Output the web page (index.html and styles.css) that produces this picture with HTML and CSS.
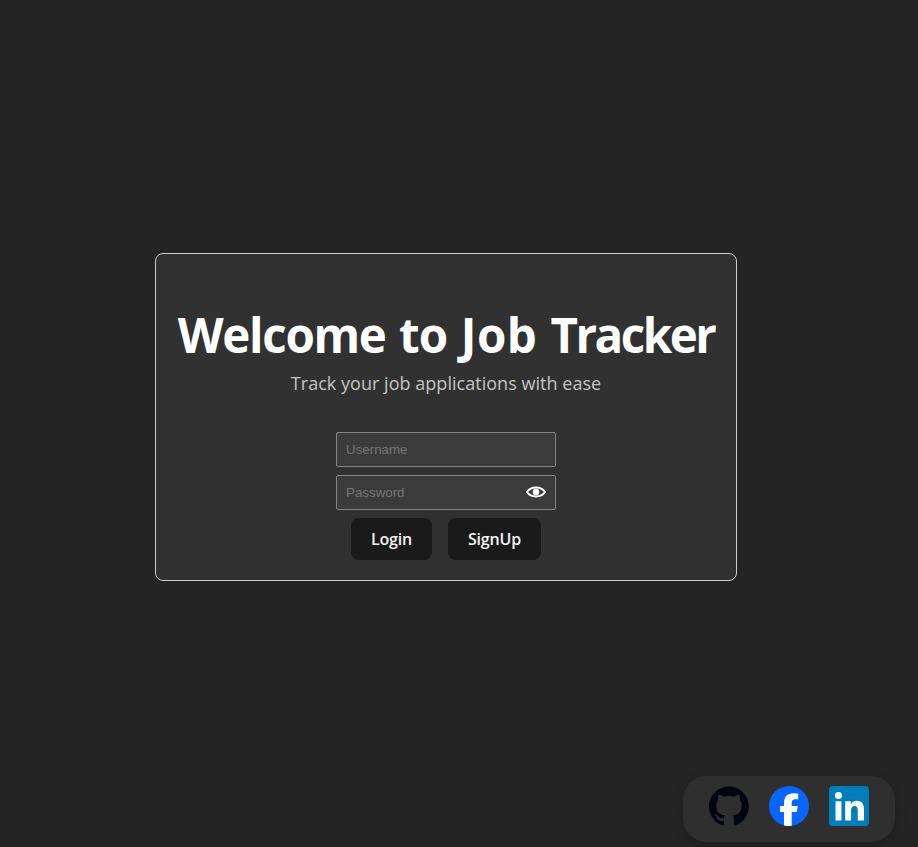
FILE: index.html
```html
<!DOCTYPE html>
<html lang="en">
<head>
<meta charset="utf-8">
<title>Job Tracker</title>
<link rel="stylesheet" href="styles.css">
</head>
<body>
<main class="page">
  <section class="card">
    <h1 class="title"><span class="word-welcome">Welcome</span> <span class="word-to">to</span> <span class="word-job">Job</span> <span class="word-tracker">Tracker</span></h1>
    <p class="subtitle">Track your job applications with ease</p>
    <form class="form">
      <input class="field" type="text" placeholder="Username">
      <div class="password">
        <input class="field" type="password" placeholder="Password">
        <svg class="eye" viewBox="0 0 20 12" aria-hidden="true">
          <path d="M1 6C3 2.900 6.300 1.500 10 1.500S17 2.900 19 6C17 9.100 13.700 10.500 10 10.500S3 9.100 1 6Z" fill="none" stroke="#fff" stroke-width="1.800"/>
          <circle cx="10" cy="6" r="3.300" fill="#fff"/>
        </svg>
      </div>
      <div class="actions">
        <button class="button login" type="button">Login</button>
        <button class="button signup" type="button">SignUp</button>
      </div>
    </form>
  </section>
</main>
<footer class="social">
  <svg class="icon" viewBox="0 0 98 96" aria-hidden="true"><path fill="#00050f" fill-rule="evenodd" d="M48.854 0C21.839 0 0 22 0 49.217c0 21.756 13.993 40.172 33.405 46.690 2.427.490 3.316-1.059 3.316-2.362 0-1.141-.080-5.052-.080-9.127-13.590 2.934-16.420-5.867-16.420-5.867-2.184-5.704-5.420-7.170-5.420-7.170-4.448-3.015.324-3.015.324-3.015 4.934.326 7.523 5.052 7.523 5.052 4.367 7.496 11.404 5.378 14.235 4.074.404-3.178 1.699-5.378 3.074-6.600-10.839-1.141-22.243-5.378-22.243-24.283 0-5.378 1.940-9.778 5.014-13.200-.485-1.222-2.184-6.275.486-13.038 0 0 4.125-1.304 13.426 5.052a46.970 46.970 0 0 1 12.214-1.630c4.125 0 8.330.571 12.213 1.630 9.302-6.356 13.427-5.052 13.427-5.052 2.670 6.763.970 11.816.485 13.038 3.155 3.422 5.015 7.822 5.015 13.200 0 18.905-11.404 23.060-22.324 24.283 1.780 1.548 3.316 4.481 3.316 9.126 0 6.600-.080 11.897-.080 13.526 0 1.304.890 2.853 3.316 2.364 19.412-6.520 33.405-24.935 33.405-46.691C97.707 22 75.788 0 48.854 0z"/></svg>
  <svg class="icon" viewBox="0 0 40 40" aria-hidden="true"><circle cx="20" cy="20" r="20" fill="#0866ff"/><path fill="#fff" d="M15 40V26H11V20H15V17.500C15 10.700 18.300 7.300 24.800 7.300C26.400 7.300 28.200 7.500 29.200 7.800V13.300H26.500C23.600 13.300 22.700 14.500 22.700 17.500V20H28.800L27.800 26H22.700V39.800Q18.700 40.400 15 39.500Z"/></svg>
  <svg class="icon" viewBox="0 0 24 24" aria-hidden="true"><rect width="24" height="24" rx="2.200" fill="#007ebb"/><path transform="translate(.35 .2)" fill="#fff" d="M20.647 20.452h-3.754v-5.569c0-1.328-.027-3.037-1.852-3.037-1.853 0-2.136 1.445-2.136 2.939v5.667H9.351V9h3.414v1.561h.046c.477-.9 1.637-1.850 3.370-1.850 3.601 0 4.467 2.370 4.467 5.455v6.286zM5.337 7.633a2.150 2.150 0 1 1 0-4.300 2.150 2.150 0 0 1 0 4.300zm1.782 12.819H3.555V9h3.564v11.452z"/></svg>
</footer>
</body>
</html>
```
FILE: styles.css
```css
* { box-sizing: border-box; }
body {
  margin: 0;
  background: #242424;
  font-family: "Segoe UI", "Open Sans", "Noto Sans", sans-serif;
}
.page {
  display: flex;
  align-items: center;
  justify-content: center;
  height: 847px;
  padding: 0 26px 13px 0;
}
.card {
  display: flex;
  flex-direction: column;
  align-items: center;
  width: 582px;
  height: 328px;
  padding: 53px 0 20px;
  background: #313131;
  border: 1px solid #ccc;
  border-radius: 8px;
}
.title {
  margin: 0;
  color: #fff;
  font-size: 47.5px;
  font-weight: 700;
  line-height: 56px;
  word-spacing: 1px;
  white-space: nowrap;
}
.word-welcome { letter-spacing: -1.3px; }
.word-to { letter-spacing: -0.8px; }
.word-job { letter-spacing: 0.4px; }
.word-tracker { letter-spacing: -2.5px; }
.subtitle {
  margin: 7px 0 0;
  color: #c4c4c4;
  font-size: 18px;
  line-height: 27px;
  letter-spacing: 0.03px;
  white-space: nowrap;
}
.form {
  display: flex;
  flex-direction: column;
  align-items: center;
  gap: 8px;
  margin-top: 35px;
}
.field {
  display: block;
  width: 220px;
  height: 35px;
  padding: 0 9px;
  background: #3b3b3b;
  border: 1px solid #858585;
  border-radius: 2px;
  color: #fff;
  font: 13.333px "Liberation Sans", Arial, sans-serif;
}
.field::placeholder { color: #757575; }
.password { position: relative; }
.eye {
  position: absolute;
  top: 11px;
  right: 10px;
  width: 20px;
  height: 12px;
}
.actions { display: flex; gap: 16px; }
.button {
  height: 42px;
  padding: 0;
  background: #1a1a1a;
  border: 0;
  border-radius: 8px;
  color: #f4f4f4;
  font-family: inherit;
  font-size: 16px;
  font-weight: 600;
  letter-spacing: -0.15px;
}
.login { width: 81px; }
.signup { width: 93px; }
.social {
  position: fixed;
  right: 23px;
  bottom: 5px;
  display: flex;
  gap: 20px;
  width: 212px;
  height: 66px;
  padding: 10px 26px;
  background: #2f2f2f;
  border-radius: 24px;
  box-shadow: 0 4px 12px rgba(0, 0, 0, 0.15);
}
.icon { width: 40px; height: 40px; }
```
